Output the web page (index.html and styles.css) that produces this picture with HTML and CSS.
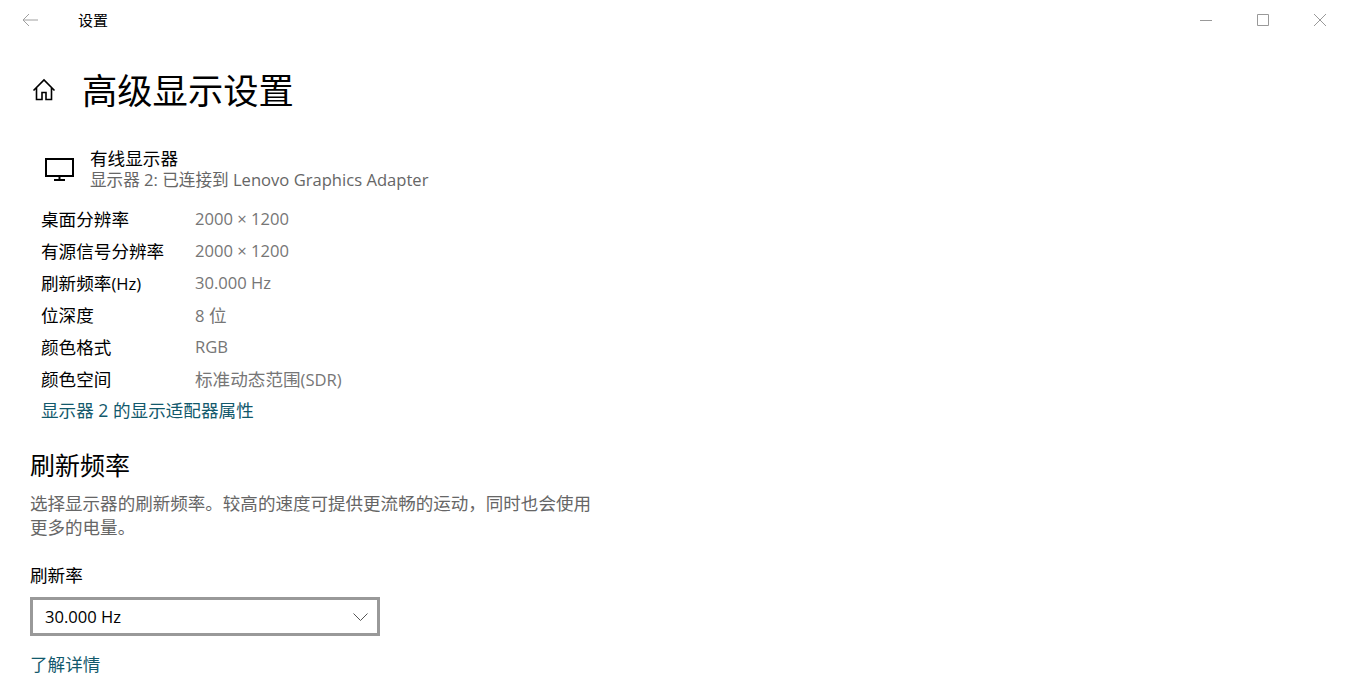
FILE: index.html
```html
<!DOCTYPE html>
<html lang="zh-CN">
<head>
    <meta charset="UTF-8">
    <title>设置</title>
    <link rel="stylesheet" href="styles.css">
</head>
<body>

<div class="titlebar">
    <div class="titlebar-left">
        <svg class="back-icon" width="16" height="14" viewBox="0 0 16 14"><path d="M7 1 1 7l6 6M1 7h15" fill="none" stroke="#a0a0a0"/></svg>
        <span class="app-name">设置</span>
    </div>
    <div class="window-buttons">
        <svg width="12" height="12" viewBox="0 0 12 12"><path d="M0 6.5h12" stroke="#999"/></svg>
        <svg width="12" height="12" viewBox="0 0 12 12"><path d="M.5.5h11v11H.5z" fill="none" stroke="#999"/></svg>
        <svg width="12" height="12" viewBox="0 0 12 12"><path d="M0 0l12 12M12 0 0 12" stroke="#999"/></svg>
    </div>
</div>

<div class="content">
    <div class="page-title">
        <svg width="24" height="24" viewBox="0 0 24 24"><path d="M1.5 12.5 12 2l10.500 10.500M4.500 10v11.500h5.500v-7h4v7h5.500V10" fill="none" stroke="#000" stroke-width="1.600"/></svg>
        <h1>高级显示设置</h1>
    </div>

    <div class="monitor">
        <svg width="30" height="24" viewBox="0 0 30 24"><path d="M1 2h27v17H1zM14.500 19v4M9 23h11" fill="none" stroke="#000" stroke-width="2"/></svg>
        <div class="monitor-text">
            <div class="monitor-name">有线显示器</div>
            <div class="monitor-sub">显示器 2: 已连接到 Lenovo Graphics Adapter</div>
        </div>
    </div>

    <div class="info-table">
        <div class="info-label">桌面分辨率</div><div class="info-value latin">2000 × 1200</div>
        <div class="info-label">有源信号分辨率</div><div class="info-value latin">2000 × 1200</div>
        <div class="info-label">刷新频率<span class="latin">(Hz)</span></div><div class="info-value latin">30.000 Hz</div>
        <div class="info-label">位深度</div><div class="info-value"><span class="latin">8</span> 位</div>
        <div class="info-label">颜色格式</div><div class="info-value latin">RGB</div>
        <div class="info-label">颜色空间</div><div class="info-value">标准动态范围<span class="latin">(SDR)</span></div>
    </div>
    <a class="link adapter-link" href="#">显示器 2 的显示适配器属性</a>

    <h2>刷新频率</h2>
    <p class="desc">选择显示器的刷新频率。较高的速度可提供更流畅的运动，同时也会使用更多的电量。</p>

    <div class="field-label">刷新率</div>
    <div class="dropdown">
        <span class="latin">30.000 Hz</span>
        <svg width="15" height="8" viewBox="0 0 15 8"><path d="M.5.5l7 7 7-7" fill="none" stroke="#555"/></svg>
    </div>
    <a class="link more-link" href="#">了解详情</a>
</div>

</body>
</html>
```

FILE: styles.css
```css
html, body {
    height: 100%;
}
body {
    margin: 0;
    background-color: #fff;
    color: #000;
    font-family: "Open Sans", "Noto Sans CJK SC", sans-serif;
    font-size: 17.6px;
    overflow: hidden;
}
.latin {
    font-size: 16.600px;
}
.titlebar {
    display: flex;
    justify-content: space-between;
    align-items: center;
    height: 39px;
}
.titlebar-left {
    display: flex;
    align-items: center;
    padding-left: 22px;
}
.back-icon {
    margin-right: 40px;
}
.app-name {
    font-size: 15px;
}
.window-buttons {
    display: flex;
    gap: 45px;
    padding-right: 23px;
}
.content {
    padding: 0 30px;
}
.page-title {
    display: flex;
    align-items: center;
    gap: 26px;
    height: 50px;
    margin-top: 26px;
}
.page-title svg {
    flex: none;
    margin-left: 2px;
}
h1 {
    margin: 0;
    font-size: 35.300px;
    font-weight: 400;
    line-height: 50px;
}
.monitor {
    display: flex;
    align-items: center;
    gap: 15px;
    margin: 32px 0 0 15px;
}
.monitor-name, .monitor-sub {
    line-height: 22px;
}
.monitor-sub {
    font-size: 16.600px;
    color: #666;
}
.info-table {
    display: grid;
    grid-template-columns: 154px auto;
    grid-auto-rows: 32px;
    align-items: center;
    margin: 11px 0 0 11px;
}
.info-value {
    color: #767676;
}
.link {
    display: block;
    color: #12596c;
    text-decoration: none;
}
.adapter-link {
    margin-left: 11px;
    line-height: 32px;
}
h2 {
    margin: 22px 0 0;
    font-size: 25px;
    font-weight: 400;
    line-height: 34px;
}
.desc {
    width: 565px;
    margin: 9px 0 0;
    color: #666;
    font-size: 17.550px;
    line-height: 24px;
}
.field-label {
    margin-top: 24px;
    line-height: 24px;
}
.dropdown {
    display: flex;
    justify-content: space-between;
    align-items: center;
    box-sizing: border-box;
    width: 350px;
    height: 39px;
    margin-top: 10px;
    padding: 0 9px 0 12px;
    border: 3px solid #999;
}
.more-link {
    margin-top: 15px;
    line-height: 26px;
}
```
